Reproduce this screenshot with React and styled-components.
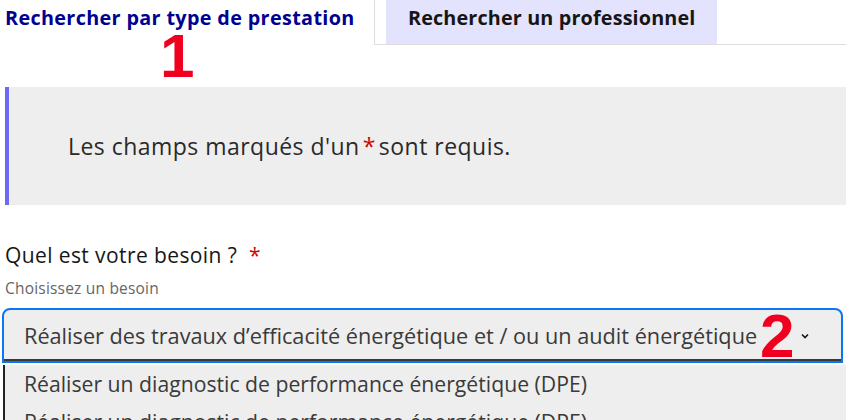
import React from "react";
import styled, { createGlobalStyle } from "styled-components";

const Global = createGlobalStyle`
  html, body { margin: 0; padding: 0; background: #fff; overflow: hidden; }
  body { width: 846px; height: 420px; }
`;

const Page = styled.div`
  position: relative;
  width: 846px;
  height: 420px;
  overflow: hidden;
  font-family: "Open Sans", sans-serif;
`;

const TabBar = styled.div`
  display: flex;
  height: 45px;
`;

const ActiveTab = styled.div`
  width: 369px;
  padding: 4px 0 0 5px;
  border-right: 1px solid #dddddd;
  color: #000091;
  font-weight: 700;
  font-size: 19.8px;
  letter-spacing: 0.35px;
  line-height: 28px;
  white-space: nowrap;
`;

const Rest = styled.div`
  flex: 1;
  display: flex;
  border-bottom: 1px solid #dddddd;
  padding-left: 11px;
`;

const Tab = styled.div`
  width: 309px;
  height: 40px;
  padding: 4px 0 0 22px;
  background: #e3e3fd;
  color: #161616;
  font-weight: 700;
  font-size: 19.8px;
  letter-spacing: 0.15px;
  line-height: 28px;
  white-space: nowrap;
`;

const Mark = styled.div`
  position: absolute;
  left: ${(p) => p.$x}px;
  top: ${(p) => p.$y}px;
  height: 44px;
  color: #f0001e;
  font-family: "Liberation Sans", Arial, sans-serif;
  font-weight: 700;
  font-size: 62px;
  line-height: 44px;
`;

const Notice = styled.div`
  margin: 42px 0 0 5px;
  height: 118px;
  border-left: 4px solid #6a6af4;
  background: #eeeeee;
  display: flex;
  align-items: center;
  padding-left: 59px;
  font-size: 23px;
  letter-spacing: 0.47px;
  color: #2a2a2a;
`;

const Star = styled.span`
  color: #ce0500;
  margin: 0 ${(p) => p.$gap || 3}px;
`;

const Field = styled.div`
  margin-top: 36px;
  padding-left: 5px;
`;

const Label = styled.div`
  font-size: 21px;
  letter-spacing: 0.4px;
  color: #161616;
  line-height: 28px;
`;

const Hint = styled.div`
  margin-top: 9px;
  font-size: 15.5px;
  letter-spacing: 0.2px;
  color: #666666;
  line-height: 20px;
`;

const Select = styled.div`
  margin: 10px 3px 0 2px;
  height: 51px;
  border: 2px solid #0a76f6;
  border-radius: 8px 8px 0 0;
  background: #eeeeee;
  display: flex;
  align-items: center;
  box-shadow: inset 0 -2px 0 #3a3a3a;
  padding: 0 20px 0 20px;
  font-size: 21.7px;
  color: #3a3a3a;
`;

const SelectText = styled.span`
  flex: 1;
  white-space: nowrap;
`;

const Chevron = styled.svg`
  width: 12px;
  height: 12px;
  margin-right: 10px;
`;

const List = styled.div`
  margin: 2px 0 0 3px;
  border-left: 2px solid #222;
  background: #eeeeee;
  font-size: 21.2px;
  color: #3a3a3a;
`;

const Option = styled.div`
  padding: 5px 19px;
  line-height: 28px;
  white-space: nowrap;
`;

export default function App() {
  return (
    <Page>
      <Global />
      <TabBar>
        <ActiveTab>Rechercher par type de prestation</ActiveTab>
        <Rest>
          <Tab>Rechercher un professionnel</Tab>
        </Rest>
      </TabBar>
      <Notice>
        Les champs marqués d'un<Star>*</Star>sont requis.
      </Notice>
      <Field>
        <Label>
          Quel est votre besoin ? <Star $gap={6}>*</Star>
        </Label>
        <Hint>Choisissez un besoin</Hint>
      </Field>
      <Select>
        <SelectText>
          Réaliser des travaux d’efficacité énergétique et / ou un audit énergétique
        </SelectText>
        <Chevron viewBox="0 0 12 12">
          <path d="M3 4.5 L6 7.5 L9 4.5" fill="none" stroke="#161616" strokeWidth="1.6" />
        </Chevron>
      </Select>
      <List>
        <Option>Réaliser un diagnostic de performance énergétique (DPE)</Option>
        <Option>Réaliser un diagnostic de performance énergétique (DPE)</Option>
      </List>
      <Mark $x={160} $y={34}>1</Mark>
      <Mark $x={760} $y={314}>2</Mark>
    </Page>
  );
}
